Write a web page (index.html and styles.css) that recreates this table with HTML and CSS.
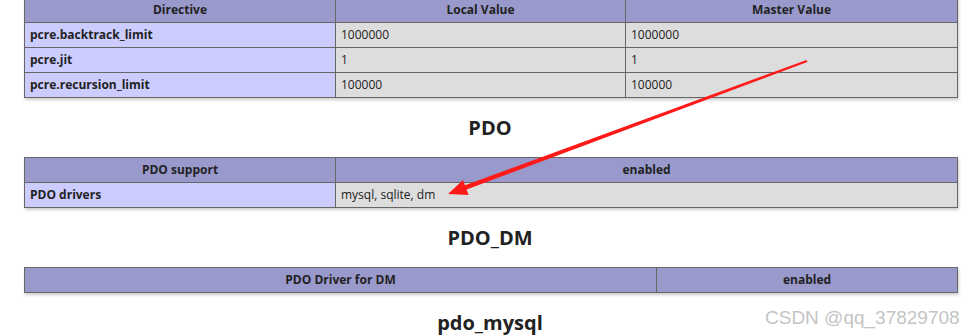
FILE: index.html
```html
<!DOCTYPE html>
<html>
<head>
<meta charset="utf-8">
<link rel="stylesheet" href="styles.css">
</head>
<body>
<div class="center">
  <table class="t1">
    <tr class="h"><th class="c1">Directive</th><th class="c2">Local Value</th><th>Master Value</th></tr>
    <tr><td class="e">pcre.backtrack_limit</td><td class="v">1000000</td><td class="v">1000000</td></tr>
    <tr><td class="e">pcre.jit</td><td class="v">1</td><td class="v">1</td></tr>
    <tr><td class="e">pcre.recursion_limit</td><td class="v">100000</td><td class="v">100000</td></tr>
  </table>
  <h2>PDO</h2>
  <table>
    <tr class="h"><th class="c1">PDO support</th><th>enabled</th></tr>
    <tr><td class="e">PDO drivers</td><td class="v">mysql, sqlite, dm</td></tr>
  </table>
  <h2>PDO_DM</h2>
  <table>
    <tr class="h"><th class="cwide">PDO Driver for DM</th><th>enabled</th></tr>
  </table>
  <h2 class="last">pdo_mysql</h2>
</div>
<svg class="arrow" width="980" height="336" viewBox="0 0 980 336">
  <polygon fill="#ff1a1a" points="807.4,62.1 806.6,59.9 465,185.2 463,179.9 448,194 468.6,194.9 466.6,189.6"/>
</svg>
<div class="watermark">CSDN @qq_37829708</div>
</body>
</html>
```
FILE: styles.css
```css
html, body {
  margin: 0;
  padding: 0;
  background: #fff;
  overflow: hidden;
}
body {
  position: relative;
  width: 980px;
  height: 336px;
  color: #222;
  font-family: "Open Sans", "Noto Sans", sans-serif;
}
.center {
  text-align: center;
}
table {
  border-collapse: collapse;
  border: 0;
  width: 934px;
  margin: 16px 0 16px 24px;
  box-shadow: 1px 2px 3px #ccc;
  text-align: left;
  table-layout: fixed;
}
table.t1 {
  margin-top: -3px;
}
td, th {
  border: 1px solid #666;
  font-size: 12px;
  line-height: 16px;
  padding: 4px 5px;
  vertical-align: baseline;
}
th {
  text-align: center;
}
.c1 { width: 300px; }
.c2 { width: 279px; }
.cwide { width: 621px; }
.h {
  background-color: #99c;
  font-weight: bold;
}
.e {
  background-color: #ccf;
  font-weight: bold;
}
.v {
  background-color: #ddd;
}
h2 {
  font-size: 20px;
  line-height: 26px;
  margin: 16.6px 0;
  font-weight: bold;
}
h2.last {
  margin-bottom: 0;
  height: 25px;
  overflow: hidden;
}
.arrow {
  position: absolute;
  left: 0;
  top: 0;
  pointer-events: none;
}
.watermark {
  position: absolute;
  left: 765px;
  top: 308px;
  font-family: "Liberation Sans", Arial, sans-serif;
  font-size: 19px;
  line-height: 19px;
  color: #c4c4c4;
  white-space: nowrap;
}
```
